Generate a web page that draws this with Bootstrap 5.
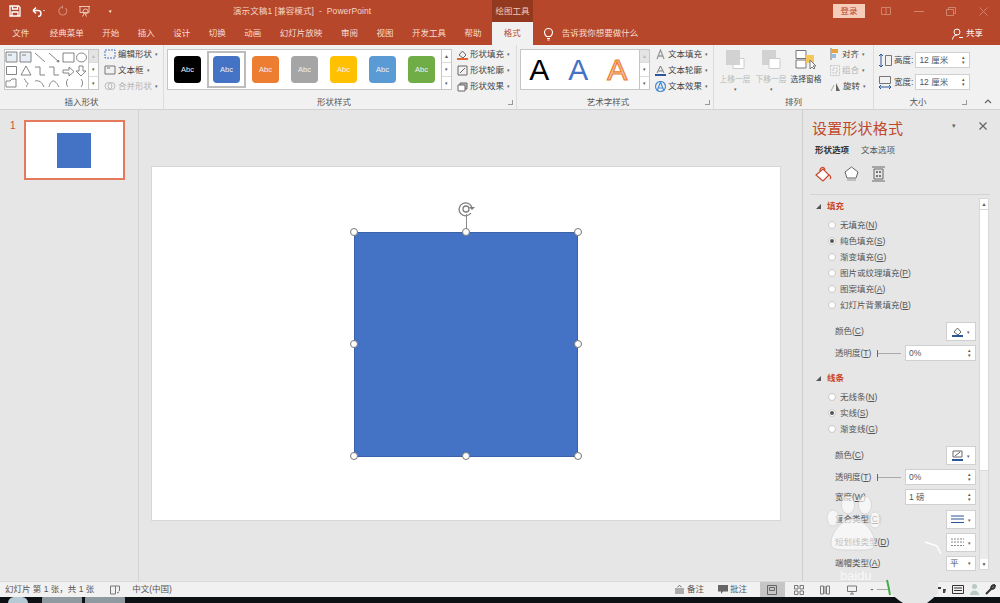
<!DOCTYPE html>
<html lang="zh-CN">
<head>
<meta charset="UTF-8">
<title>PowerPoint</title>
<link href="https://cdn.jsdelivr.net/npm/bootstrap@5.3.3/dist/css/bootstrap.min.css" rel="stylesheet">
<script src="https://cdn.jsdelivr.net/npm/bootstrap@5.3.3/dist/js/bootstrap.bundle.min.js"></script>
<style>
html,body{height:603px;overflow:hidden}
body{width:1000px;background:#e6e6e6;font-family:"Liberation Sans","Noto Sans CJK SC",sans-serif;font-size:8.5px;line-height:1.2;color:#444;position:relative}
svg{display:block;flex:none}
.titlebar{height:22px;background:#b7472a;color:#f3d5ca}
.qat{width:233px;padding-left:9px;gap:10px;flex:none}
.qat .caret{margin-left:8px;color:#fff}
.doc-title{width:259px;flex:none;letter-spacing:.1px}
.tool-tab{width:41px;height:22px;background:#93391f;color:#f0c8b8;flex:none}
.login{width:32px;height:14px;margin-left:300px;background:#f6cdbb;color:#b7472a;flex:none}
.winbtns{margin-left:5px;flex:none}
.winbtns span{width:32.5px;display:flex;justify-content:center}
.tabs{height:23px;background:#b7472a;color:#f6ddd4;padding-left:3px}
.tabs .t{padding:0 9.25px;white-space:nowrap}
.tabs .t:first-child{margin-right:2px}
.tabs .active{background:#f1f1f1;color:#b7472a;width:41px;height:23px;padding:0;margin-left:1px;display:flex;align-items:center;justify-content:center}
.tell{margin-left:9px;gap:7px}
.share{margin-left:auto;padding-right:17px;gap:3px;color:#fff}
.ribbon{height:65px;background:#f1f1f1;border-bottom:1px solid #d2d2d2}
.rgroup{flex:none;border-right:1px solid #dcdcdc;position:relative;display:flex;flex-direction:column}
.g-shapes{width:164px}
.g-styles{width:353px}
.g-art{width:197px}
.g-arrange{width:160px}
.g-size{width:102px;border-right:0}
.rbody{height:46px;margin-top:4px;display:flex;padding-left:3px}
.g-shapes .rbody{padding-left:4px}
.rlabel{text-align:center;margin-top:2px;color:#555}
.g-styles .rlabel{padding-right:12px}
.g-art .rlabel{padding-right:14px}
.g-size .rlabel{padding-right:14px}
.launch{position:absolute;right:3px;bottom:4px;width:5px;height:5px;border:1px solid #999;border-width:0 1px 1px 0}
.g-size .launch{right:9px}
.gallery{height:41px;background:#fff;border:1px solid #c6c6c6;display:flex;align-items:center}
.gal-shapes{width:85px}
.gal-styles{width:275px}
.gal-art{width:120px}
.gscroll{width:10px;height:41px;display:flex;flex-direction:column;background:#fff;border:1px solid #c6c6c6;border-left:0}
.gscroll i{flex:1;display:flex;align-items:center;justify-content:center;font-style:normal;font-size:5px;color:#555;border-bottom:1px solid #dcdcdc}
.gscroll i:last-child{border-bottom:0}
.gscroll i.off{background:#e4e4e4;color:#bbb}
.cmds{display:flex;flex-direction:column;justify-content:space-between;height:44px;margin-top:-1px;margin-left:5px}
.g-arrange .cmds{margin-left:6px}
.cmd{display:flex;align-items:center;gap:2px;height:12px;white-space:nowrap}
.cmd.off{color:#b4b4b4}
.caret{font-size:5px;color:#666;margin-left:1px}
.chip{width:26.5px;height:26.5px;border-radius:4px;color:#f1f1f1;font-size:7.5px;display:flex;align-items:center;justify-content:center;flex:none}
.chip-wrap{width:39px;height:37px;display:flex;align-items:center;justify-content:center;flex:none;border:2px solid transparent}
.chip-wrap.sel{border-color:#bdbdbd}
.c-black{background:#000}
.c-blue{background:#4472c4}
.c-orange{background:#ed7d31}
.c-grey{background:#a5a5a5}
.c-gold{background:#ffc000}
.c-sky{background:#5b9bd5}
.c-green{background:#70ad47}
.art-a{width:39.5px;text-align:center;font-size:30px;line-height:1;flex:none;margin-left:-.5px}
.a-black{color:#000;margin-left:-1.5px}
.a-blue{color:#4472c4}
.a-orange{color:#f6c9aa;-webkit-text-stroke:1.2px #ed7d31}
.big{width:36px;display:flex;flex-direction:column;align-items:center;font-size:7.8px;color:#b9b9b9;white-space:nowrap;padding-top:1px}
.big span:first-of-type{margin-top:6px}
.big .caret{margin-top:2px;margin-left:0}
.big.live{color:#444;margin-left:-1px}
.size-rows{flex-direction:column;gap:6px;padding-left:4px;padding-top:3px}
.size-row{display:flex;align-items:center;gap:2px}
.size-row .spin{width:55px;height:16px;margin-left:0}
.spin{background:#fff;border:1px solid #d0d0d0;display:flex;align-items:center;justify-content:space-between;padding:0 4px 0 3px;color:#555}
.spin b{font-weight:400;font-size:5px;line-height:5px;display:block;color:#555;text-align:center}
.collapse-btn{padding:0 0 3px 0}
.work{height:471px}
.thumbs{width:139px;border-right:1px solid #d4d4d4;padding:10px 0 0 10px;gap:8px;color:#c9532f;font-size:10px}
.thumb{width:101px;height:60px;background:#fff;border:2px solid #e27a5b}
.thumb div{width:34px;height:35px;background:#4472c4}
.stage{width:663px;padding:56px 0 0 12px}
.slide{width:630px;height:355px;background:#fff;border:1px solid #d7d7d7;position:relative}
.shape{position:absolute;left:202px;top:65px;width:224px;height:225px;background:#4472c4;border:1px solid #3a62aa}
.hd{position:absolute;width:8px;height:8px;border-radius:50%;background:#fff;border:1px solid #777;transform:translate(-50%,-50%)}
.hx1{left:202px}.hx2{left:314px}.hx3{left:426px}
.hy1{top:65px}.hy2{top:177px}.hy3{top:289px}
.rot-line{position:absolute;left:314px;top:47px;width:1px;height:18px;background:#8a8a8a}
.rot{position:absolute;left:306px;top:34px}
.pane{width:198px;border-left:1px solid #cfcfcf;padding-left:9px;position:relative;color:#555}
.pane-title{height:39px;padding-top:10px;color:#c0492b;font-size:15px;line-height:18px;letter-spacing:.2px}
.pane-close{position:absolute;top:12px;right:13px;gap:23px;color:#666}
.pane-close span{font-size:7px}
.pane-tabs{height:14px;gap:12px;margin-top:-6px;padding-left:3px}
.pane-tabs b{color:#333}
.pane-icons{height:28px;padding-left:3px;gap:12px;margin-top:3px}
.pane-rule{height:1px;background:#d4d4d4;margin:6px 9px 0 -2px;width:180px}
.pane-main{height:382px;position:relative}
.pane-list{width:167px;overflow:hidden}
.sec{height:16px;color:#c9452a;margin-top:3px;margin-bottom:3px;gap:6px;padding-left:4px;font-weight:700}
.sec.second{margin-top:9px}
.tri{width:0;height:0;border-style:solid;border-width:0 0 5px 5px;border-color:transparent transparent #555}
.radio-row{height:16px;padding-left:16px;gap:4px}
.dot{width:8px;height:8px;border-radius:50%;background:#fff;border:1px solid #c9c9c9;display:flex;align-items:center;justify-content:center;flex:none}
.dot.on::after{content:"";width:4px;height:4px;border-radius:50%;background:#555}
.prop{padding-left:23px;display:flex;align-items:center}
.prop .name{width:42px;white-space:nowrap}
.p-pick{height:19px;margin-top:4px}
.p-first{margin-top:9px}
.p-field{height:16px;margin-top:4px}
.p-after{margin-top:5px}
.p-last{height:15px}
.pick{width:30px;height:19px;background:#fff;border:1px solid #d0d0d0;margin-left:auto;margin-right:3px;display:flex;align-items:center;justify-content:center;gap:3px}
.track{width:24px;height:1px;background:#aaa;position:relative}
.track::before{content:"";position:absolute;left:0;top:-3px;width:1px;height:7px;background:#666}
.pct{width:71px;height:16px;margin-left:auto;margin-right:3px}
.pct.short{width:30px;height:15px}
.sbar{position:absolute;left:167px;top:3px;width:10px;height:372px;background:#ebebeb;border:1px solid #d8d8d8;display:flex;flex-direction:column}
.sbar .up,.sbar .dn{height:10px;background:#fff;font-size:5px;display:flex;align-items:center;justify-content:center;color:#555}
.sbar .dn{margin-top:auto}
.sbar .thumbbar{height:262px;background:#fff;border-top:1px solid #d8d8d8;border-bottom:1px solid #d8d8d8}
.status{height:16px;background:#f1f1f1;border-top:1px solid #dadada;color:#555;padding-left:5px}
.lang{margin-left:12px}
.notes{margin-left:503px;gap:3px}
.remarks{margin-left:14px;gap:2px}
.view{width:25px;height:16px;display:flex;align-items:center;justify-content:center;margin-left:1.5px}
.view.on{background:#c6c6c6;margin-left:13px}
.zoom-minus{margin-left:6px;color:#666;font-weight:700}
.zoom-line{width:12px;height:1px;background:#aaa;margin-left:4px}
.tray{margin-left:auto;gap:6px;padding-right:4px}
.taskbar{height:6px;background:#0d1114;position:relative}
.taskbar span{position:absolute;top:0;height:6px;width:40px;background:#8f9aa0;border-radius:1px 1px 0 0}
.taskbar .w1{left:42px}
.taskbar .w2{left:85px}
.orb{position:absolute;left:8px;top:0;width:20px;height:6px;background:#b5cad4;border-radius:10px 10px 0 0}
.paw{position:absolute;left:820px;top:490px}
</style>
</head>
<body>
<!-- title bar -->
<div class="titlebar d-flex align-items-center">
  <div class="qat d-flex align-items-center">
    <svg width="12" height="12" viewBox="0 0 12 12" fill="none" stroke="#fff" stroke-width="1.3"><path d="M1 1h8.500L11 2.500V11H1z"/><path d="M3.500 1v3h5V1M3 11V7h6v4"/></svg>
    <svg width="16" height="12" viewBox="0 0 16 12" fill="none" stroke="#fff" stroke-width="1.4"><path d="M2 5.500h5a3 3 0 0 1 0 6M2 5.500l3-3M2 5.500l3 3"/><path d="M12 5h2l-1 1.300z" fill="#fff" stroke="none"/></svg>
    <svg width="11" height="12" viewBox="0 0 11 12" fill="none" stroke="#cf8b75" stroke-width="1.1"><path d="M8.500 3a4 4 0 1 1-3-1M5.500 .5v3"/></svg>
    <svg width="13" height="12" viewBox="0 0 13 12" fill="none" stroke="#ecc4b6"><path d="M1 1.500h11M2 1.500v6h9v-6M6.500 7.500l-2 4M6.500 7.500l2 4"/><circle cx="7.5" cy="6.5" r="2.5"/></svg>
    <span class="caret">▾</span>
  </div>
  <div class="doc-title">演示文稿1 [兼容模式] &nbsp;-&nbsp; PowerPoint</div>
  <div class="tool-tab d-flex align-items-center justify-content-center">绘图工具</div>
  <div class="login d-flex align-items-center justify-content-center">登录</div>
  <div class="winbtns d-flex align-items-center">
    <span><svg width="10" height="8" viewBox="0 0 10 8" fill="none" stroke="#cf856d"><path d="M.5.500h9v7h-9zM5 .5v7"/></svg></span>
    <span><svg width="10" height="8" viewBox="0 0 10 8" fill="none" stroke="#cf856d"><path d="M0 4.500h10"/></svg></span>
    <span><svg width="10" height="9" viewBox="0 0 10 9" fill="none" stroke="#cf856d"><path d="M2.500 2V.5h7v6H8M.5 2.500h7v6h-7z"/></svg></span>
    <span><svg width="9" height="9" viewBox="0 0 9 9" fill="none" stroke="#cf856d"><path d="M.5.500l8 8M8.500.500l-8 8"/></svg></span>
  </div>
</div>

<!-- ribbon tabs -->
<div class="tabs d-flex align-items-center">
  <span class="t">文件</span><span class="t">经典菜单</span><span class="t">开始</span><span class="t">插入</span><span class="t">设计</span><span class="t">切换</span><span class="t">动画</span><span class="t">幻灯片放映</span><span class="t">审阅</span><span class="t">视图</span><span class="t">开发工具</span><span class="t">帮助</span>
  <span class="t active">格式</span>
  <span class="tell d-flex align-items-center">
    <svg width="13" height="14" viewBox="0 0 13 14" fill="none" stroke="#fff" stroke-width="1.1"><path d="M4.500 9.500C3 8 2.500 7 2.500 5.500a4 4 0 0 1 8 0c0 1.500-.5 2.500-2 4zM5 11.500h3M5.500 13h2"/></svg>
    告诉我你想要做什么
  </span>
  <span class="share d-flex align-items-center">
    <svg width="11" height="12" viewBox="0 0 11 12" fill="none" stroke="#fff"><circle cx="5" cy="4" r="3"/><path d="M.5 11.500c.5-3 2-4.500 4.500-4.500M7 9.500h4"/></svg>共享
  </span>
</div>

<!-- ribbon -->
<div class="ribbon d-flex">
  <div class="rgroup g-shapes">
    <div class="rbody">
      <div class="gallery gal-shapes">
        <svg width="83" height="39" viewBox="0 0 83 39" fill="none" stroke="#777" stroke-width=".9">
          <path d="M1 2h11v10H1zM3 5h4M15 2h11v10H15zM17 5h4" fill="#e8eef5"/>
          <path d="M30 3l10 9M44 3l10 9M54 12l-2-.5 1.500-1.500z"/>
          <path d="M58 3h11v9H58zM71.500 7.500a5 4.500 0 1 0 10 0a5 4.500 0 1 0-10 0"/>
          <path d="M1.500 16.500h10v8h-10zM16 25l5-9 5 9zM30 17h5v8h5M44 17h5v8h5M58 20h6v-3l5 4.500-5 4.500v-3h-6zM74 16h4v5h3l-5 5-5-5h3z"/>
          <path d="M1 37v-6h4l2-2h4v8zM19 29c3 1 0 2 3 3.500s-2 3 0 4.500M30 31c4-1 7 1 9 6M44 37c2-8 6-8 10 0M63 29c-2 2-2 6 0 8M76 29c2 2 2 6 0 8"/>
        </svg>
      </div>
      <div class="gscroll"><i class="off">▲</i><i>▾</i><i>▾</i></div>
      <div class="cmds">
        <div class="cmd"><svg width="12" height="10" viewBox="0 0 12 10" fill="none" stroke="#4472c4" stroke-dasharray="2 1"><path d="M1 1h10v8H1z"/></svg>编辑形状<span class="caret">▾</span></div>
        <div class="cmd"><svg width="12" height="10" viewBox="0 0 12 10" fill="none" stroke="#777"><path d="M1 1h10v8H1zM3 3h3"/></svg>文本框 <span class="caret">▾</span></div>
        <div class="cmd off"><svg width="12" height="10" viewBox="0 0 12 10" fill="none" stroke="#bbb"><circle cx="4.5" cy="5" r="3.5"/><circle cx="7.5" cy="5" r="3.5"/></svg>合并形状<span class="caret">▾</span></div>
      </div>
    </div>
    <div class="rlabel">插入形状</div>
  </div>

  <div class="rgroup g-styles">
    <div class="rbody">
      <div class="gallery gal-styles">
        <div class="chip-wrap"><div class="chip c-black">Abc</div></div>
        <div class="chip-wrap sel"><div class="chip c-blue">Abc</div></div>
        <div class="chip-wrap"><div class="chip c-orange">Abc</div></div>
        <div class="chip-wrap"><div class="chip c-grey">Abc</div></div>
        <div class="chip-wrap"><div class="chip c-gold">Abc</div></div>
        <div class="chip-wrap"><div class="chip c-sky">Abc</div></div>
        <div class="chip-wrap"><div class="chip c-green">Abc</div></div>
      </div>
      <div class="gscroll"><i>▲</i><i>▾</i><i>▾</i></div>
      <div class="cmds">
        <div class="cmd"><svg width="11" height="11" viewBox="0 0 11 11" fill="none" stroke="#666"><path d="M2 6l3.500-4L9 6l-3 3z"/><path d="M0 10h11" stroke="#e0662e" stroke-width="2"/></svg>形状填充<span class="caret">▾</span></div>
        <div class="cmd"><svg width="11" height="11" viewBox="0 0 11 11" fill="none" stroke="#666"><path d="M1 1h9v9H1zM3 8l5-5"/></svg>形状轮廓<span class="caret">▾</span></div>
        <div class="cmd"><svg width="11" height="11" viewBox="0 0 11 11" fill="#fff" stroke="#666"><path d="M3 2h7v6H3z" fill="#bbb"/><path d="M1 4h7v6H1z"/></svg>形状效果<span class="caret">▾</span></div>
      </div>
    </div>
    <div class="rlabel">形状样式</div>
    <span class="launch"></span>
  </div>

  <div class="rgroup g-art">
    <div class="rbody">
      <div class="gallery gal-art">
        <span class="art-a a-black">A</span>
        <span class="art-a a-blue">A</span>
        <span class="art-a a-orange">A</span>
      </div>
      <div class="gscroll"><i class="off">▲</i><i>▾</i><i>▾</i></div>
      <div class="cmds">
        <div class="cmd"><svg width="11" height="11" viewBox="0 0 11 11" fill="none" stroke="#999" stroke-width="1.3"><path d="M2 10L5.500 1 9 10M3.500 7h4"/></svg>文本填充<span class="caret">▾</span></div>
        <div class="cmd"><svg width="11" height="11" viewBox="0 0 11 11" fill="none" stroke="#777"><path d="M2 8L5.500 1 9 8M3.500 6h4"/><path d="M0 10h11" stroke="#2b579a" stroke-width="2"/></svg>文本轮廓<span class="caret">▾</span></div>
        <div class="cmd"><svg width="11" height="11" viewBox="0 0 11 11" fill="none" stroke="#4a8bd0" stroke-width="1.2"><path d="M2 10L5.500 1 9 10M3.500 7h4"/><circle cx="5.5" cy="5.5" r="5"/></svg>文本效果<span class="caret">▾</span></div>
      </div>
    </div>
    <div class="rlabel">艺术字样式</div>
    <span class="launch"></span>
  </div>

  <div class="rgroup g-arrange">
    <div class="rbody">
      <div class="big"><svg width="20" height="19" viewBox="0 0 20 19"><path d="M8 8.500h11v10H8z" fill="#fff" stroke="#ccc"/><path d="M1 0h14v15H1z" fill="#d2d2d2"/></svg><span>上移一层</span><span class="caret">▾</span></div>
      <div class="big"><svg width="20" height="19" viewBox="0 0 20 19"><path d="M1 0h14v15H1z" fill="#d2d2d2"/><path d="M8 8.500h11v10H8z" fill="#fff" stroke="#ccc"/></svg><span>下移一层</span><span class="caret">▾</span></div>
      <div class="big live"><svg width="22" height="19" viewBox="0 0 22 19" fill="#fff" stroke="#777"><path d="M1 .5h10v8H1zM1 10h10v8H1z"/><path d="M11 5h8v8h-8z" fill="#f5c659" stroke="none"/><path d="M15 10v9l2-2 2 2 1-1-2-2h3z"/></svg><span>选择窗格</span></div>
      <div class="cmds">
        <div class="cmd"><svg width="10" height="12" viewBox="0 0 10 12"><path d="M1 0v12" stroke="#777"/><path d="M2 1h6v4H2z" fill="#e8a33d"/><path d="M2 6h4v4H2z" fill="#9dbbdc"/></svg>对齐<span class="caret">▾</span></div>
        <div class="cmd off"><svg width="10" height="11" viewBox="0 0 10 11" fill="none" stroke="#c5c5c5" stroke-dasharray="2 1"><path d="M.5.500h9v10h-9zM3 3h4v5H3z"/></svg>组合<span class="caret">▾</span></div>
        <div class="cmd"><svg width="11" height="11" viewBox="0 0 11 11"><path d="M6 10V2l4 8z" fill="#666"/><path d="M1 10l3-6" stroke="#aaa" fill="none"/></svg>旋转<span class="caret">▾</span></div>
      </div>
    </div>
    <div class="rlabel">排列</div>
  </div>

  <div class="rgroup g-size">
    <div class="rbody size-rows">
      <div class="size-row">
        <svg width="14" height="15" viewBox="0 0 14 15" fill="none" stroke="#2b579a"><path d="M3 1v13M1 3l2-2 2 2M1 12l2 2 2-2"/><path d="M7.500 2.500h6v10h-6z" stroke="#777"/></svg>
        <span>高度:</span><div class="spin">12 厘米<span><b>▴</b><b>▾</b></span></div>
      </div>
      <div class="size-row">
        <svg width="14" height="15" viewBox="0 0 14 15" fill="none" stroke="#777"><path d="M1.500 1.500h11v7h-11z"/><path d="M1 12h12M1 12l2-2M1 12l2 2M13 12l-2-2M13 12l-2 2" stroke="#2b579a"/></svg>
        <span>宽度:</span><div class="spin">12 厘米<span><b>▴</b><b>▾</b></span></div>
      </div>
    </div>
    <div class="rlabel">大小</div>
    <span class="launch"></span>
  </div>
  <div class="collapse-btn flex-fill d-flex align-items-end justify-content-center">
    <svg width="8" height="8" viewBox="0 0 8 8" fill="none" stroke="#666" stroke-width="1.2"><path d="M1 5l3-3 3 3"/></svg>
  </div>
</div>

<!-- work area -->
<div class="work d-flex">
  <div class="thumbs d-flex">
    <span>1</span>
    <div class="thumb d-flex align-items-center justify-content-center"><div></div></div>
  </div>
  <div class="stage">
    <div class="slide">
      <svg class="rot" width="18" height="16" viewBox="0 0 18 16" fill="none" stroke="#7d7d7d" stroke-width="1.3"><path d="M13 12a6.500 6.500 0 1 1 1-5"/><circle cx="8" cy="8" r="3"/><path d="M11 6h6l-3 3z" fill="#7d7d7d" stroke="none"/></svg>
      <div class="rot-line"></div>
      <div class="shape"></div>
      <span class="hd hx1 hy1"></span><span class="hd hx2 hy1"></span><span class="hd hx3 hy1"></span>
      <span class="hd hx1 hy2"></span><span class="hd hx3 hy2"></span>
      <span class="hd hx1 hy3"></span><span class="hd hx2 hy3"></span><span class="hd hx3 hy3"></span>
    </div>
  </div>

  <!-- format pane -->
  <div class="pane">
    <div class="pane-title">设置形状格式</div>
    <div class="pane-close d-flex align-items-center">
      <span>▾</span>
      <svg width="8" height="8" viewBox="0 0 8 8" fill="none" stroke="#666" stroke-width="1.3"><path d="M.5.500l7 7M7.500.500l-7 7"/></svg>
    </div>
    <div class="pane-tabs d-flex align-items-center"><b>形状选项</b><span>文本选项</span></div>
    <div class="pane-icons d-flex align-items-center">
      <svg width="17" height="17" viewBox="0 0 17 17" fill="#fff" stroke="#c9452a" stroke-width="1.2"><path d="M1 9l7-6 6 6-6 6z"/><path d="M5 5c0-4 4-5 5-1M14 9c2 1 2 3 1 4" fill="none"/></svg>
      <svg width="15" height="16" viewBox="0 0 15 16" fill="#fff" stroke="#666"><path d="M7.500 1L14 6l-2 6H3L1 6z"/><path d="M3 14h9" stroke="#999"/></svg>
      <svg width="15" height="16" viewBox="0 0 15 16" fill="none" stroke="#666"><path d="M1 1h13M1 15h13M3 3h9v10H3z"/><path d="M5 5h2v2H5zM8 9h2v2H8zM5 9h2v2H5zM8 5h2v2H8z" fill="#777" stroke="none"/></svg>
    </div>
    <div class="pane-rule"></div>
    <div class="pane-main">
      <div class="pane-list">
        <div class="sec d-flex align-items-center"><span class="tri"></span>填充</div>
        <div class="radio-row d-flex align-items-center"><span class="dot"></span><span>无填充(<u>N</u>)</span></div>
        <div class="radio-row d-flex align-items-center"><span class="dot on"></span><span>纯色填充(<u>S</u>)</span></div>
        <div class="radio-row d-flex align-items-center"><span class="dot"></span><span>渐变填充(<u>G</u>)</span></div>
        <div class="radio-row d-flex align-items-center"><span class="dot"></span><span>图片或纹理填充(<u>P</u>)</span></div>
        <div class="radio-row d-flex align-items-center"><span class="dot"></span><span>图案填充(<u>A</u>)</span></div>
        <div class="radio-row d-flex align-items-center"><span class="dot"></span><span>幻灯片背景填充(<u>B</u>)</span></div>
        <div class="prop p-pick p-first"><span class="name">颜色(<u>C</u>)</span>
          <div class="pick"><svg width="11" height="11" viewBox="0 0 11 11" fill="none" stroke="#666"><path d="M2 6l3.500-4L9 6l-3 3z"/><path d="M0 10h11" stroke="#2b579a" stroke-width="2"/></svg><span class="caret">▾</span></div></div>
        <div class="prop p-field"><span class="name">透明度(<u>T</u>)</span><span class="track"></span>
          <div class="spin pct">0%<span><b>▴</b><b>▾</b></span></div></div>
        <div class="sec second d-flex align-items-center"><span class="tri"></span>线条</div>
        <div class="radio-row d-flex align-items-center"><span class="dot"></span><span>无线条(<u>N</u>)</span></div>
        <div class="radio-row d-flex align-items-center"><span class="dot on"></span><span>实线(<u>S</u>)</span></div>
        <div class="radio-row d-flex align-items-center"><span class="dot"></span><span>渐变线(<u>G</u>)</span></div>
        <div class="prop p-pick p-first"><span class="name">颜色(<u>C</u>)</span>
          <div class="pick"><svg width="11" height="11" viewBox="0 0 11 11" fill="none" stroke="#666"><path d="M1 1h9v6H1zM3 6l5-4"/><path d="M0 10h11" stroke="#2b579a" stroke-width="2"/></svg><span class="caret">▾</span></div></div>
        <div class="prop p-field"><span class="name">透明度(<u>T</u>)</span><span class="track"></span>
          <div class="spin pct">0%<span><b>▴</b><b>▾</b></span></div></div>
        <div class="prop p-field"><span class="name">宽度(<u>W</u>)</span>
          <div class="spin pct">1 磅<span><b>▴</b><b>▾</b></span></div></div>
        <div class="prop p-pick p-after"><span class="name">复合类型(<u>C</u>)</span>
          <div class="pick"><svg width="13" height="9" viewBox="0 0 13 9" fill="none" stroke="#2b579a"><path d="M0 1h13M0 4h13M0 7.500h13"/></svg><span class="caret">▾</span></div></div>
        <div class="prop p-pick"><span class="name">短划线类型(<u>D</u>)</span>
          <div class="pick"><svg width="13" height="9" viewBox="0 0 13 9" fill="none" stroke="#888" stroke-dasharray="2 1"><path d="M0 1h13M0 4h13M0 7.500h13"/></svg><span class="caret">▾</span></div></div>
        <div class="prop p-field p-last"><span class="name">端帽类型(<u>A</u>)</span>
          <div class="spin pct short">平<span><b>▾</b></span></div></div>
      </div>
      <div class="sbar">
        <div class="up">▲</div>
        <div class="thumbbar"></div>
        <div class="dn">▼</div>
      </div>
    </div>
  </div>
</div>

<!-- status bar -->
<div class="status d-flex align-items-center">
  <span>幻灯片 第 1 张，共 1 张</span>
  <svg class="ms-3" width="10" height="10" viewBox="0 0 10 10" fill="none" stroke="#777"><path d="M.5 1h5v8h-5zM5.500 1h4v5M7 8l2-1"/></svg>
  <span class="lang">中文(中国)</span>
  <span class="notes d-flex align-items-center"><svg width="9" height="9" viewBox="0 0 9 9" fill="none" stroke="#666"><path d="M0 4h9M0 6h9M0 8h9M2.500 2l2-1.500 2 1.500"/></svg>备注</span>
  <span class="remarks d-flex align-items-center"><svg width="10" height="9" viewBox="0 0 10 9" fill="#666"><path d="M0 0h10v6.500H5L3 9V6.500H0z"/></svg>批注</span>
  <span class="view on"><svg width="10" height="10" viewBox="0 0 10 10" fill="none" stroke="#666"><path d="M.5.500h9v9h-9zM2.500 2.500h5v3h-5z"/></svg></span>
  <span class="view"><svg width="10" height="10" viewBox="0 0 10 10" fill="none" stroke="#777"><path d="M.5.500h3.500v3.500H.5zM6 .5h3.500v3.500H6zM.5 6h3.500v3.500H.5zM6 6h3.500v3.500H6z"/></svg></span>
  <span class="view"><svg width="10" height="10" viewBox="0 0 10 10" fill="none" stroke="#777"><path d="M.5 1h3v8h-3zM6.500 1h3v8h-3zM5 1v8"/></svg></span>
  <span class="view"><svg width="10" height="10" viewBox="0 0 10 10" fill="none" stroke="#777"><path d="M.5 1h9v5.500h-9zM5 6.500V9M3 9h4"/></svg></span>
  <span class="zoom-minus">-</span>
  <span class="zoom-line"></span>
  <span class="tray d-flex align-items-center">
    <svg width="8" height="6" viewBox="0 0 8 6" fill="#444"><path d="M0 0h3v2H0zM5 2h3l-1 4H5z"/></svg>
    <svg width="12" height="9" viewBox="0 0 12 9" fill="none" stroke="#333"><path d="M.5.500h11v8H.5zM2 3h8M2 5.500h8"/></svg>
    <svg width="9" height="11" viewBox="0 0 9 11" fill="#b9c9c4"><circle cx="4.5" cy="2.500" r="2.500"/><path d="M0 11c0-6 9-6 9 0z"/></svg>
    <svg width="11" height="11" viewBox="0 0 11 11" fill="none" stroke="#333" stroke-width="2"><path d="M1 10l5-5M6 5c0-2 1-4 4-4M6 5c2 0 4-1 4-4"/></svg>
  </span>
</div>
<div class="taskbar"><i class="orb"></i><span class="w1"></span><span class="w2"></span></div>

<!-- baidu jingyan watermark -->
<svg class="paw" width="140" height="113" viewBox="0 0 140 113">
  <path d="M68 88h50v15q-3 4-11 10H83q-8-5-11-9z" fill="#e6e6e6"/>
  <path d="M67 90q2 8 3 15" fill="none" stroke="#3fae49" stroke-width="2"/>
  <g fill="#fff" fill-opacity=".62" stroke="#c9c9c9" stroke-width=".6">
    <ellipse cx="28" cy="15" rx="6.5" ry="9"/>
    <ellipse cx="45" cy="15" rx="6.5" ry="9"/>
    <ellipse cx="13" cy="28" rx="6" ry="8"/>
    <ellipse cx="55" cy="30" rx="6" ry="8"/>
    <path d="M33 29c11 0 22 14 22 24 0 8-9 7-22 7s-22 1-22-7c0-10 11-24 22-24z"/>
  </g>
  <text x="20" y="90" font-size="13" fill="#fff" fill-opacity=".75" font-family="Liberation Sans, sans-serif">baidu</text>
  <path d="M105 52l12 4 4 8" fill="none" stroke="#fff" stroke-width="1.500"/>
</svg>
</body>
</html>
